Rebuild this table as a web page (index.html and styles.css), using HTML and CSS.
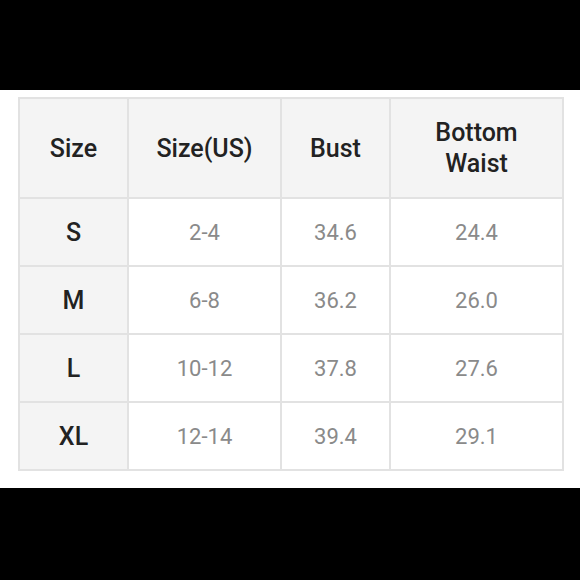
FILE: index.html
```html
<!DOCTYPE html>
<html>
<head>
<meta charset="utf-8">
<link rel="stylesheet" href="styles.css">
</head>
<body>
<div class="band">
  <table class="chart">
    <colgroup>
      <col class="c1"><col class="c2"><col class="c3"><col class="c4">
    </colgroup>
    <thead>
      <tr class="head">
        <th>Size</th><th>Size(US)</th><th>Bust</th><th>Bottom<br>Waist</th>
      </tr>
    </thead>
    <tbody>
      <tr><th>S</th><td>2-4</td><td>34.6</td><td>24.4</td></tr>
      <tr><th>M</th><td>6-8</td><td>36.2</td><td>26.0</td></tr>
      <tr><th>L</th><td>10-12</td><td>37.8</td><td>27.6</td></tr>
      <tr><th>XL</th><td>12-14</td><td>39.4</td><td>29.1</td></tr>
    </tbody>
  </table>
</div>
</body>
</html>
```
FILE: styles.css
```css
html, body {
  margin: 0;
  padding: 0;
  background: #000;
}
body {
  box-sizing: border-box;
  height: 580px;
  overflow: hidden;
  padding-top: 90px;
  font-family: Roboto, "Liberation Sans", sans-serif;
}
.band {
  background: #fff;
  height: 398px;
  box-sizing: border-box;
  padding: 7px 0 0 18px;
}
.chart {
  border-collapse: collapse;
  table-layout: fixed;
  width: 544px;
}
.c1 { width: 109px; }
.c2 { width: 153px; }
.c3 { width: 109px; }
.c4 { width: 173px; }
.chart th, .chart td {
  border: 2px solid #e2e2e2;
  text-align: center;
  padding: 0;
}
.chart th {
  background: #f4f4f4;
  color: #222;
  font-weight: 500;
  font-size: 25px;
  line-height: 31px;
}
.chart td {
  background: #fff;
  color: #8a8a8a;
  font-weight: 400;
  font-size: 22px;
}
.head th { height: 98px; }
tbody tr { height: 68px; }
```
